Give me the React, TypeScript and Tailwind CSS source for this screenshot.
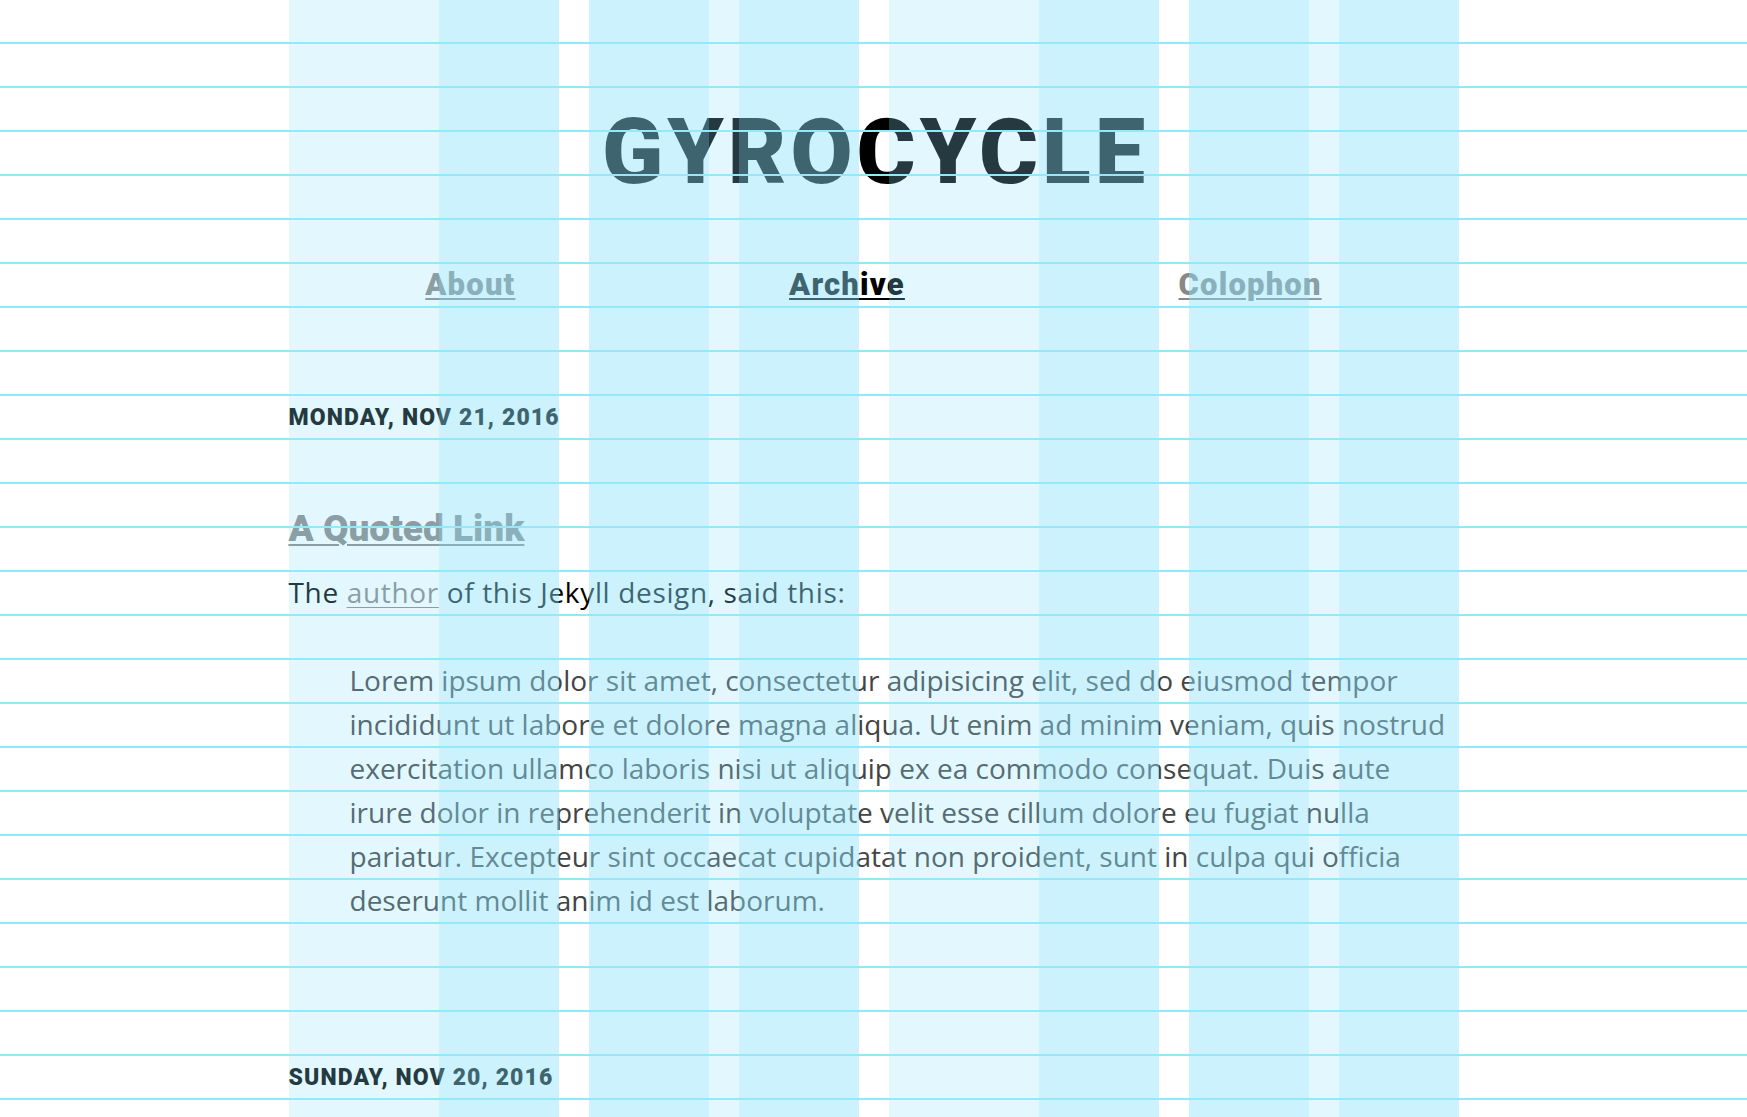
import React from "react";

const display = "font-['Roboto',_'Inter',_sans-serif] font-black";
const text = "font-['Open_Sans',_'Noto_Sans',_sans-serif]";

const LOREM =
  "Lorem ipsum dolor sit amet, consectetur adipisicing elit, sed do eiusmod tempor incididunt ut labore et dolore magna aliqua. Ut enim ad minim veniam, quis nostrud exercitation ullamco laboris nisi ut aliquip ex ea commodo consequat. Duis aute irure dolor in reprehenderit in voluptate velit esse cillum dolore eu fugiat nulla pariatur. Excepteur sint occaecat cupidatat non proident, sunt in culpa qui officia deserunt mollit anim id est laborum.";

function GridOverlay() {
  const wide = [0, 1, 2, 3];
  const narrow = [0, 1, 2, 3, 4, 5, 6, 7];
  const rows = Array.from({ length: 30 }, (_, i) => i);

  return (
    <div className="pointer-events-none absolute inset-0 overflow-hidden">
      {/* 4 column grid */}
      <div className="absolute inset-0 flex justify-center">
        <div className="grid w-[1170px] grid-cols-4 gap-[30px]">
          {wide.map((i) => (
            <div key={i} className="bg-[rgba(141,227,251,0.255)]" />
          ))}
        </div>
      </div>
      {/* 8 column grid, first column of each half left out */}
      <div className="absolute inset-0 flex justify-center">
        <div className="grid w-[1170px] grid-cols-8 gap-[30px]">
          {narrow.map((i) => (
            <div
              key={i}
              className={i % 4 === 0 ? "" : "bg-[rgba(141,227,251,0.255)]"}
            />
          ))}
        </div>
      </div>
      {/* baseline grid */}
      <div className="absolute inset-0 flex flex-col pt-[42px]">
        {rows.map((i) => (
          <div key={i} className="h-[44px] shrink-0 border-t-2 border-[#94e8f9]" />
        ))}
      </div>
    </div>
  );
}

function NavLink({ label, active }: { label: string; active?: boolean }) {
  return (
    <a
      href="#"
      className={`${display} text-[31px] leading-[44px] tracking-[1.2px] underline decoration-2 underline-offset-[3px] ${
        active ? "text-black" : "text-[#888]"
      }`}
    >
      {label}
    </a>
  );
}

function PostDate({ children, className = "" }: { children: React.ReactNode; className?: string }) {
  return (
    <p
      className={`${display} text-[23px] uppercase leading-[44px] tracking-[1.1px] text-black ${className}`}
    >
      {children}
    </p>
  );
}

export default function App() {
  return (
    <div className="relative min-h-screen overflow-hidden bg-white">
      <div className="mx-auto w-[1170px]">
        <header>
          <h1
            className={`${display} mt-[109px] pl-[4px] text-center text-[90px] leading-[88px] tracking-[4px] text-black`}
          >
            GYROCYCLE
          </h1>
          <nav className="mt-[66px] flex justify-around">
            <NavLink label="About" />
            <NavLink label="Archive" active />
            <NavLink label="Colophon" />
          </nav>
        </header>

        <main>
          <article>
            <PostDate className="mt-[89px]">Monday, Nov 21, 2016</PostDate>
            <h2 className={`${display} mt-[67px] text-[37px] leading-[44px]`}>
              <a href="#" className="text-[#888] underline decoration-2 underline-offset-[3px]">
                A Quoted Link
              </a>
            </h2>
            <p className={`${text} mt-[19px] text-[28px] leading-[44px] tracking-[0.65px] text-black`}>
              The{" "}
              <a href="#" className="text-[#888] underline decoration-1 underline-offset-[4px]">
                author
              </a>{" "}
              of this Jekyll design, said this:
            </p>
            <blockquote
              className={`${text} mt-[44px] ml-[61px] mr-[10px] text-[28px] leading-[44px] text-[#444]`}
            >
              {LOREM}
            </blockquote>
          </article>

          <article>
            <PostDate className="mt-[134px]">Sunday, Nov 20, 2016</PostDate>
          </article>
        </main>
      </div>
      <GridOverlay />
    </div>
  );
}
